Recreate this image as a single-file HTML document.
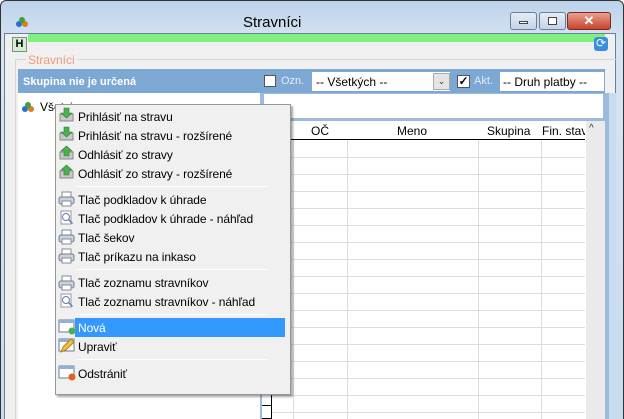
<!DOCTYPE html>
<html><head><meta charset="utf-8"><style>
*{margin:0;padding:0;box-sizing:border-box}
body{width:624px;height:419px;overflow:hidden;background:#fff;font-family:"Liberation Sans",sans-serif;font-size:12px;position:relative}
.a{position:absolute}
.mi{position:absolute;left:78px;color:#000;font-family:"Liberation Sans",sans-serif;font-size:12px;letter-spacing:-0.1px}
.sep{position:absolute;left:77px;width:190px;height:1px;background:#a0a0a0;border-bottom:1px solid #fff}
.hl{position:absolute;height:1px;left:262px;width:323px;background:#ddd}
.vl{position:absolute;width:1px;top:140px;height:279px;background:#ddd}
</style></head><body>
<div class="a" style="left:0;top:0;width:624px;height:419px;background:linear-gradient(#bcd2ea,#d7e4f2 40px,#c9dbef);border:1px solid #333;border-bottom:none;border-radius:6px 6px 0 0"></div>
<div class="a" style="left:4px;top:33px;width:612px;height:386px;background:#f0f0f0;border:1px solid #6b7f96;border-bottom:none"></div>
<div class="a" style="left:5px;top:34px;width:11px;height:385px;background:#f0f0f0"></div>
<div class="a" style="left:16px;top:16px;width:12px;height:10px"><svg width="12" height="10"><circle cx="3" cy="7" r="3" fill="#2a6fd0"/><circle cx="9" cy="7" r="3" fill="#e07a20"/><circle cx="6" cy="3" r="3" fill="#40a040"/></svg></div>
<div class="a" style="left:243px;top:14px;font-size:15px;color:#000;font-family:'Liberation Sans',sans-serif">Stravníci</div>
<div class="a" style="left:510px;top:12px;width:27px;height:18px;border:1px solid #6d7e95;border-radius:3px;background:linear-gradient(#e5edf7,#c4d4e7)"><div class="a" style="left:8px;top:8px;width:9px;height:3px;border:1px solid #444;background:#fff"></div></div>
<div class="a" style="left:539px;top:12px;width:27px;height:18px;border:1px solid #6d7e95;border-radius:3px;background:linear-gradient(#e5edf7,#c4d4e7)"><div class="a" style="left:8px;top:4px;width:9px;height:8px;border:1px solid #444;background:#fff"></div></div>
<div class="a" style="left:567px;top:12px;width:44px;height:18px;border:1px solid #7a2c22;border-radius:3px;background:linear-gradient(#e9a08f,#c7432c);color:#fff;text-align:center;font-weight:bold;font-size:13px;line-height:16px">✕</div>
<div class="a" style="left:28px;top:34px;width:577px;height:8px;background:#80f080"></div>
<div class="a" style="left:12px;top:37px;width:15px;height:15px;background:#d0f0d0;border:1px solid #888;font-weight:bold;font-size:11px;text-align:center;line-height:13px">H</div>
<div class="a" style="left:594px;top:37px;width:14px;height:14px;border-radius:3px;background:#3a8ee0;color:#fff;font-size:12px;line-height:13px;text-align:center">⟳</div>
<div class="a" style="left:15px;top:59px;width:601px;height:360px;border:1px solid #d5d5d5;border-right:none;border-bottom:none"></div>
<div class="a" style="left:26px;top:53px;background:#f0f0f0;color:#f19a7a;font-size:12px;padding:0 2px">Stravníci</div>
<div class="a" style="left:18px;top:69px;width:587px;height:24px;background:#7ea8d4"></div>
<div class="a" style="left:23px;top:76px;color:#fff;font-weight:bold;font-size:11px">Skupina nie je určená</div>
<div class="a" style="left:264px;top:75px;width:12px;height:12px;background:#fff;border:1px solid #555"></div>
<div class="a" style="left:281px;top:75px;color:#e4ecf6;font-size:11px">Ozn.</div>
<div class="a" style="left:312px;top:72px;width:138px;height:19px;background:#fff"></div>
<div class="a" style="left:316px;top:75px;font-size:12px">-- Všetkých --</div>
<div class="a" style="left:433px;top:73px;width:17px;height:17px;background:#e4e4e4;border:1px solid #aaa;font-size:9px;text-align:center;line-height:15px;color:#333">⌄</div>
<div class="a" style="left:457px;top:75px;width:13px;height:13px;background:#fff;border:1px solid #555;font-size:12px;line-height:11px;text-align:center;font-weight:bold">✓</div>
<div class="a" style="left:474px;top:75px;color:#e4ecf6;font-size:11px">Akt.</div>
<div class="a" style="left:500px;top:72px;width:104px;height:19px;background:#fff"></div>
<div class="a" style="left:503px;top:75px;font-size:12px">-- Druh platby --</div>
<div class="a" style="left:18px;top:93px;width:242px;height:326px;background:#fff"></div>
<div class="a" style="left:260px;top:93px;width:2px;height:326px;background:#9cbbdc"></div>
<div class="a" style="left:22px;top:101px;width:12px;height:10px"><svg width="12" height="10"><circle cx="3" cy="7" r="3" fill="#2a6fd0"/><circle cx="9" cy="7" r="3" fill="#e07a20"/><circle cx="6" cy="3" r="3" fill="#40a040"/></svg></div>
<div class="a" style="left:40px;top:100px;font-size:12px">Všetci</div>
<div class="a" style="left:262px;top:93px;width:343px;height:28px;background:#9cbbdc"></div>
<div class="a" style="left:264px;top:94px;width:339px;height:24px;background:#fff"></div>
<div class="a" style="left:262px;top:121px;width:324px;height:298px;background:#fff"></div>
<div class="a" style="left:262px;top:139px;width:323px;height:1px;background:#000"></div>
<div class="a" style="left:311px;top:124px;font-size:12px">OČ</div>
<div class="a" style="left:397px;top:124px;font-size:12px">Meno</div>
<div class="a" style="left:487px;top:124px;font-size:12px">Skupina</div>
<div class="a" style="left:542px;top:124px;font-size:12px;width:43px;overflow:hidden;white-space:nowrap">Fin. stav</div>
<div class="a" style="left:586px;top:121px;width:19px;height:298px;background:#eaeaea"></div>
<div class="a" style="left:589px;top:123px;font-size:10px;color:#333">^</div>
<div class="a" style="left:605px;top:93px;width:4px;height:326px;background:#9cbbdc"></div>
<div class="a" style="left:609px;top:93px;width:7px;height:326px;background:#c9dbef"></div>
<div class="vl" style="left:293px"></div><div class="vl" style="left:347px"></div><div class="vl" style="left:478px"></div><div class="vl" style="left:541px"></div>
<div class="hl" style="top:157px"></div><div class="hl" style="top:174px"></div><div class="hl" style="top:191px"></div><div class="hl" style="top:208px"></div><div class="hl" style="top:225px"></div><div class="hl" style="top:242px"></div><div class="hl" style="top:259px"></div><div class="hl" style="top:276px"></div><div class="hl" style="top:293px"></div><div class="hl" style="top:310px"></div><div class="hl" style="top:327px"></div><div class="hl" style="top:344px"></div><div class="hl" style="top:361px"></div><div class="hl" style="top:378px"></div><div class="hl" style="top:395px"></div><div class="hl" style="top:412px"></div>
<div class="a" style="left:262px;top:394px;width:10px;height:25px;border:1px solid #000;border-left:none;background:#fff"></div>
<div class="a" style="left:262px;top:405px;width:10px;height:1px;background:#000"></div>
<div class="a" style="left:55px;top:104px;width:236px;height:291px;background:#f0f0f0;border:1px solid #979797;box-shadow:2px 2px 2px rgba(0,0,0,.35)"></div>
<div class="a" style="left:75px;top:318px;width:210px;height:19px;background:#3399ff"></div>
<svg class="a" style="left:58px;top:107px" width="18" height="280">
<g id="d"><rect x="2" y="7" width="13" height="7" fill="#c8c8c8" stroke="#888"/><path d="M6 1h5v5h3l-5.5 5L3 6h3z" fill="#4caf50" stroke="#2e7d32" stroke-width=".6"/></g>
<use href="#d" y="19"/>
<g transform="translate(0,38)"><rect x="2" y="7" width="13" height="7" fill="#c8c8c8" stroke="#888"/><path d="M6 11h5V6h3L8.5 1 3 6h3z" fill="#4caf50" stroke="#2e7d32" stroke-width=".6"/></g>
<g transform="translate(0,57)"><rect x="2" y="7" width="13" height="7" fill="#c8c8c8" stroke="#888"/><path d="M6 11h5V6h3L8.5 1 3 6h3z" fill="#4caf50" stroke="#2e7d32" stroke-width=".6"/></g>
<g id="p" transform="translate(0,84)"><rect x="4" y="1" width="9" height="6" fill="#fff" stroke="#889"/><rect x="1" y="6" width="15" height="7" rx="2" fill="#c9d3df" stroke="#6f7d8c"/><rect x="4" y="10" width="9" height="5" fill="#fff" stroke="#889"/></g>
<g transform="translate(0,103)"><rect x="3" y="1" width="10" height="13" fill="#fff" stroke="#999"/><circle cx="8" cy="7" r="3.5" fill="none" stroke="#5a7fae"/><path d="M10.5 9.5l4 4" stroke="#5a7fae" stroke-width="1.5"/></g>
<use href="#p" y="38"/><use href="#p" y="57"/><use href="#p" y="84"/>
<g transform="translate(0,186)"><rect x="3" y="1" width="10" height="13" fill="#fff" stroke="#999"/><circle cx="8" cy="7" r="3.5" fill="none" stroke="#5a7fae"/><path d="M10.5 9.5l4 4" stroke="#5a7fae" stroke-width="1.5"/></g>
<g transform="translate(0,211)"><rect x="1" y="2" width="15" height="12" fill="#fff" stroke="#6f7d8c"/><rect x="1" y="2" width="15" height="3" fill="#8fb0d8"/><circle cx="14" cy="13" r="3.5" fill="#4caf50"/></g>
<g transform="translate(0,230)"><rect x="1" y="2" width="15" height="12" fill="#fff" stroke="#6f7d8c"/><rect x="1" y="2" width="15" height="3" fill="#8fb0d8"/><path d="M3 15l2-5 8-8 3 3-8 8z" fill="#f0c040" stroke="#b08020"/></g>
<g transform="translate(0,257)"><rect x="1" y="2" width="15" height="12" fill="#fff" stroke="#6f7d8c"/><rect x="1" y="2" width="15" height="3" fill="#8fb0d8"/><circle cx="14" cy="13" r="3.5" fill="#e06020"/></g>
</svg>
<div class="mi" style="top:110px">Prihlásiť na stravu</div>
<div class="mi" style="top:129px">Prihlásiť na stravu - rozšírené</div>
<div class="mi" style="top:148px">Odhlásiť zo stravy</div>
<div class="mi" style="top:167px">Odhlásiť zo stravy - rozšírené</div>
<div class="sep" style="top:186px"></div>
<div class="mi" style="top:193px">Tlač podkladov k úhrade</div>
<div class="mi" style="top:212px">Tlač podkladov k úhrade - náhľad</div>
<div class="mi" style="top:231px">Tlač šekov</div>
<div class="mi" style="top:250px">Tlač príkazu na inkaso</div>
<div class="sep" style="top:269px"></div>
<div class="mi" style="top:276px">Tlač zoznamu stravníkov</div>
<div class="mi" style="top:295px">Tlač zoznamu stravníkov - náhľad</div>
<div class="sep" style="top:314px"></div>
<div class="mi" style="top:321px;color:#fff">Nová</div>
<div class="mi" style="top:340px">Upraviť</div>
<div class="sep" style="top:359px"></div>
<div class="mi" style="top:367px">Odstrániť</div>
</body></html>
